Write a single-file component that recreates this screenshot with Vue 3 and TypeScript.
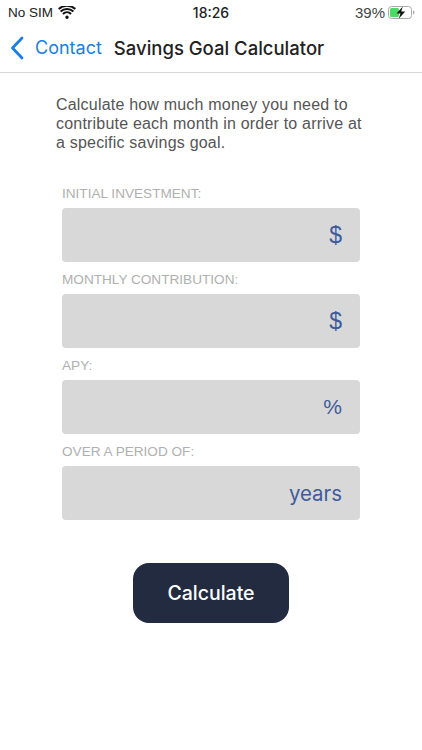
<script setup lang="ts">
const fields = [
  { label: 'INITIAL INVESTMENT:', unit: '$', cls: 'sym' },
  { label: 'MONTHLY CONTRIBUTION:', unit: '$', cls: 'sym' },
  { label: 'APY:', unit: '%', cls: 'pct' },
  { label: 'OVER A PERIOD OF:', unit: 'years', cls: 'word' },
]
</script>

<template>
  <div class="page">
    <div class="status">
      <div class="st-left">
        <span>No SIM</span>
        <svg class="wifi" viewBox="0 0 18 13" width="18" height="13">
          <path d="M9 9.600a1.700 1.700 0 1 1 0 3.400 1.700 1.700 0 0 1 0-3.400z" fill="#111" />
          <path d="M4.900 7.900a6 6 0 0 1 8.200 0M2.600 5.400a9.400 9.400 0 0 1 12.800 0M.7 3a12.400 12.400 0 0 1 16.600 0" fill="none" stroke="#111" stroke-width="2" />
        </svg>
      </div>
      <div class="st-time">18:26</div>
      <div class="st-right">
        <span>39%</span>
        <svg viewBox="0 0 27 13" width="27" height="13">
          <rect x=".5" y=".5" width="23" height="12" rx="3" fill="#fff" stroke="#aaa" />
          <rect x="2" y="2" width="9" height="9" rx="1.500" fill="#4cd964" />
          <path d="M25 4.500c1 .3 1.500 1 1.500 2s-.5 1.700-1.500 2z" fill="#aaa" />
          <path d="M14.800 .5 8.500 7.500h4l-1.800 5.200 6.500-7.200h-4z" fill="#111" />
        </svg>
      </div>
    </div>
    <header class="nav">
      <svg class="chev" viewBox="0 0 14 24" width="14" height="24">
        <path d="M12 2 2.500 12 12 22" fill="none" stroke="#1a7fe0" stroke-width="2.800" stroke-linecap="round" stroke-linejoin="round" />
      </svg>
      <span class="back">Contact</span>
      <h1 class="title">Savings Goal Calculator</h1>
    </header>
    <main class="content">
      <p class="intro">Calculate how much money you need to contribute each month in order to arrive at a specific savings goal.</p>
      <div class="form">
        <div v-for="f in fields" :key="f.label" class="field">
          <div class="label">{{ f.label }}</div>
          <div class="box" :class="f.cls">{{ f.unit }}</div>
        </div>
      </div>
      <button class="calc" type="button">Calculate</button>
    </main>
  </div>
</template>

<style>
html, body { margin: 0; background: #fff; }
</style>

<style scoped>
.page {
  width: 422px;
  height: 750px;
  overflow: hidden;
  background: #fff;
  font-family: "Liberation Sans", Arial, sans-serif;
  color: #222;
}
.status {
  height: 24px;
  display: grid;
  grid-template-columns: 1fr auto 1fr;
  align-items: center;
  padding: 0 8px;
  font-size: 13.500px;
  color: #222;
}
.st-left { display: flex; align-items: center; gap: 5px; }
.wifi { display: block; }
.st-time { font-family: Inter, sans-serif; font-size: 14px; font-weight: 500; }
.st-right { display: flex; justify-content: flex-end; align-items: center; gap: 3px; margin-right: -1px; color: #444; font-size: 15px; }
.nav {
  height: 49px;
  box-sizing: border-box;
  display: flex;
  align-items: center;
  padding: 0 0 1px 10px;
  border-bottom: 1px solid #d8d8d8;
}
.chev { display: block; }
.back { margin-left: 11px; font-family: Inter, sans-serif; font-size: 18px; color: #1a7fe0; }
.title { margin: 0 0 0 12px; font-family: Inter, sans-serif; font-size: 18.500px; font-weight: 500; color: #222; }
.content { padding: 22px 62px 0; display: flex; flex-direction: column; }
.intro {
  margin: 0 0 0 -6px;
  font-size: 16px;
  line-height: 19px;
  letter-spacing: 0.2px;
  color: #555;
  width: 310px;
}
.form { margin-top: 33px; display: flex; flex-direction: column; gap: 9px; }
.label { font-size: 13.600px; line-height: 17px; color: #b0b0b0; margin-bottom: 6px; }
.box {
  height: 54px;
  box-sizing: border-box;
  background: #d8d8d8;
  border-radius: 4px;
  display: flex;
  align-items: center;
  justify-content: flex-end;
  padding-right: 18px;
  color: #3f5b9b;
}
.box.sym { font-size: 23px; }
.box.pct { font-size: 21px; }
.box.word { font-size: 20.400px; font-family: Inter, sans-serif; }
.calc {
  align-self: center;
  margin-top: 43px;
  width: 156px;
  height: 60px;
  border: 0;
  border-radius: 16px;
  background: #222b40;
  color: #fff;
  font: 500 19.500px Inter, "Liberation Sans", sans-serif;
}
</style>
